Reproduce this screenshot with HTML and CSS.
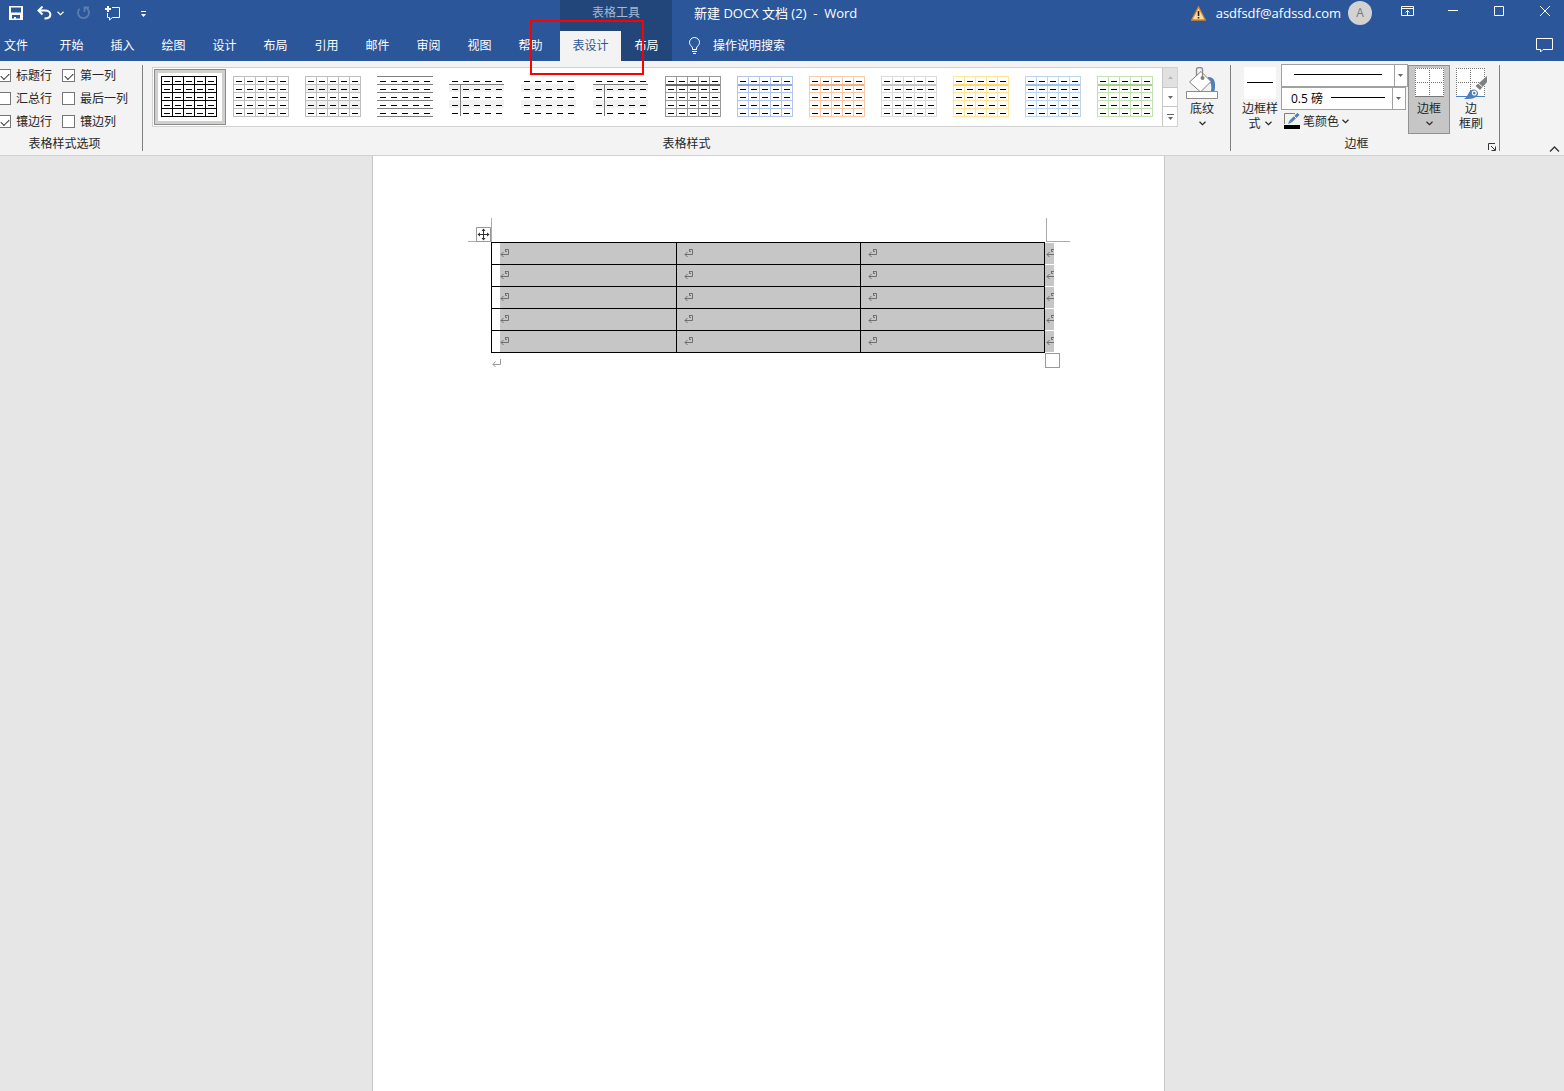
FILE: index.html
```html
<!doctype html>
<html lang="zh-CN">
<head>
<meta charset="utf-8">
<title>新建 DOCX 文档 (2) - Word</title>
<meta name="viewport" content="width=device-width, initial-scale=1">
<link rel="stylesheet" href="styles.css">
</head>
<body>

<!-- shared shapes -->
<svg class="shapes" aria-hidden="true">
  <symbol id="chevron" viewBox="0 0 7 5"><path d="M.5 .8L3.5 3.6L6.5 .8" fill="none" stroke="currentColor" stroke-width="1.2"/></symbol>
  <symbol id="arrow" viewBox="0 0 5 3"><path d="M0 0H5L2.5 3Z" fill="currentColor"/></symbol>
  <symbol id="dashes" viewBox="0 0 56 41"><path d="M3 5.5H53M3 13.5H53M3 21.5H53M3 29.5H53M3 37.5H53" fill="none" stroke="#000" stroke-dasharray="6 5"/></symbol>
  <symbol id="bands" viewBox="0 0 56 41"><path d="M0 8H55V16H0ZM0 24H55V32H0Z" fill="#f2f2f2"/></symbol>
  <symbol id="rows" viewBox="0 0 56 41"><path d="M0 .5H56M0 8.5H56M0 16.5H56M0 24.5H56M0 32.5H56M0 40.5H56" fill="none" stroke="currentColor"/></symbol>
  <symbol id="cols" viewBox="0 0 56 41"><path d="M.5 0V41M11.5 0V41M22.5 0V41M33.5 0V41M44.5 0V41M55.5 0V41" fill="none" stroke="currentColor"/></symbol>
  <symbol id="head" viewBox="0 0 56 41"><path d="M1 9H55" fill="none" stroke="currentColor" stroke-width="2"/></symbol>
  <symbol id="cross" viewBox="0 0 56 41"><path d="M0 8.5H55M11.5 8V40" fill="none" stroke="currentColor"/></symbol>
  <symbol id="cellmark" viewBox="0 0 9 9"><path d="M5 .5H8.500V5.500H1M5.500 0V2.500H7M3.500 3L1 5.500L3.500 8" fill="none" stroke="currentColor" stroke-width=".9"/></symbol>
</svg>

<header>
  <div class="head-left">
    <div class="quick">
      <button class="q-save" aria-label="保存"><svg width="14" height="14"><path d="M0 0H14V14H0ZM2 1.5V6.5H12V1.5ZM3 9V12.500H5V11H7V12.500H11V9Z" fill="#fff" fill-rule="evenodd"/></svg></button>
      <button class="q-undo" aria-label="撤消"><svg width="15" height="14"><path d="M5.500 .5L1.500 4.500L5.500 8.500M1.500 4.500H8C15 4.500 15.500 12.500 7.500 12.500" fill="none" stroke="#fff" stroke-width="2"/></svg></button>
      <button class="q-more" aria-label="撤消列表"><svg width="7" height="5"><use href="#chevron"/></svg></button>
      <button class="q-redo" aria-label="重复" disabled><svg width="14" height="14"><path d="M10 1.700A5.500 5.500 0 1 1 3.500 2.800M8.500 6V1.500H13" fill="none" stroke="#5c7db0" stroke-width="1.800"/></svg></button>
      <button class="q-note" aria-label="新建批注"><svg width="15" height="15"><path d="M7 1.500H14.500V11.500H7.500L4.500 14V11.500H2.500V7" fill="none" stroke="#fff"/><path d="M3 0V6M0 3H6" stroke="#fff" stroke-width="2"/></svg></button>
      <button class="q-custom" aria-label="自定义快速访问工具栏"><svg width="5" height="6"><path d="M0 .5H5" stroke="#fff"/><path d="M0 3H5L2.500 6Z" fill="#fff"/></svg></button>
    </div>
    <nav class="tabs">
      <button class="tab file">文件</button>
      <button class="tab">开始</button>
      <button class="tab">插入</button>
      <button class="tab">绘图</button>
      <button class="tab">设计</button>
      <button class="tab">布局</button>
      <button class="tab">引用</button>
      <button class="tab">邮件</button>
      <button class="tab">审阅</button>
      <button class="tab">视图</button>
      <button class="tab">帮助</button>
    </nav>
  </div>

  <div class="head-context">
    <div class="context-title">表格工具</div>
    <nav class="tabs">
      <button class="tab active">表设计</button>
      <button class="tab">布局</button>
    </nav>
    <div class="red-frame"></div>
  </div>

  <div class="head-right">
    <div class="titlebar">
      <div class="title">新建 DOCX 文档 (2)&nbsp; -&nbsp; Word</div>
      <svg class="warning" width="15" height="15"><path d="M7.500 1L14.300 14H.7Z" fill="#fbdc9a" stroke="#d9822b" stroke-width="1.300"/><path d="M7.500 5V10M7.500 11V12.500" stroke="#222" stroke-width="1.600"/></svg>
      <span class="account">asdfsdf@afdssd.com</span>
      <span class="avatar">A</span>
      <div class="win-buttons">
        <button aria-label="功能区显示选项"><svg width="13" height="10"><path d="M.5 .5H12.500V9.500H.5ZM0 2.500H13M6.500 9V4.500M4.500 6.500L6.500 4.500L8.500 6.500" fill="none" stroke="#fff"/></svg></button>
        <button aria-label="最小化"><svg width="10" height="10"><path d="M0 4.500H10" stroke="#fff"/></svg></button>
        <button aria-label="最大化"><svg width="10" height="10"><path d="M.5 .5H9.500V9.500H.5Z" fill="none" stroke="#fff"/></svg></button>
        <button aria-label="关闭"><svg width="10" height="10"><path d="M0 0L10 10M10 0L0 10" stroke="#fff"/></svg></button>
      </div>
    </div>
    <div class="tellme">
      <svg width="13" height="17"><path d="M4.500 12.500V11C4.500 9.500 1.500 8.500 1.500 5.500A5 5 0 0 1 11.500 5.500C11.500 8.500 8.500 9.500 8.500 11V12.500ZM4 14.500H9M5 16.500H8" fill="none" stroke="#fff"/></svg>
      <button>操作说明搜索</button>
      <button class="comments" aria-label="批注"><svg width="17" height="15"><path d="M.5 .5H16.500V11.500H7L4.500 14V11.500H.5Z" fill="none" stroke="#fff"/></svg></button>
    </div>
  </div>
</header>

<div class="ribbon">
  <section class="group options">
    <div class="group-body checks">
      <label><input type="checkbox" checked>标题行</label>
      <label><input type="checkbox" checked>第一列</label>
      <label><input type="checkbox">汇总行</label>
      <label><input type="checkbox">最后一列</label>
      <label><input type="checkbox" checked>镶边行</label>
      <label><input type="checkbox">镶边列</label>
    </div>
    <div class="group-name">表格样式选项</div>
  </section>

  <section class="group styles">
    <div class="group-body">
      <div class="gallery">
        <button class="thumb selected" aria-label="网格型"><svg color="#000"><use href="#rows"/><use href="#cols"/><use href="#dashes"/></svg></button>
        <button class="thumb" aria-label="网格型浅色"><svg color="#bfbfbf"><use href="#rows"/><use href="#cols"/><use href="#dashes"/></svg></button>
        <button class="thumb" aria-label="无格式表格 1"><svg color="#bfbfbf"><use href="#bands"/><use href="#rows"/><use href="#cols"/><use href="#dashes"/></svg></button>
        <button class="thumb" aria-label="无格式表格 2"><svg color="#7f7f7f"><use href="#rows"/><use href="#dashes"/></svg></button>
        <button class="thumb" aria-label="无格式表格 3"><svg color="#7f7f7f"><use href="#bands"/><use href="#cross"/><use href="#dashes"/></svg></button>
        <button class="thumb" aria-label="无格式表格 4"><svg><use href="#bands"/><use href="#dashes"/></svg></button>
        <button class="thumb" aria-label="无格式表格 5"><svg color="#7f7f7f"><use href="#bands"/><use href="#cross"/><use href="#dashes"/></svg></button>
        <button class="thumb" aria-label="网格表 1 浅色"><svg color="#999"><use href="#rows"/><use href="#cols"/><use href="#head" color="#666"/><use href="#dashes"/></svg></button>
        <button class="thumb" aria-label="网格表 1 着色 1"><svg color="#b4c6e7"><use href="#rows"/><use href="#cols"/><use href="#head" color="#8eaadb"/><use href="#dashes"/></svg></button>
        <button class="thumb" aria-label="网格表 1 着色 2"><svg color="#f7caac"><use href="#rows"/><use href="#cols"/><use href="#head" color="#f4b083"/><use href="#dashes"/></svg></button>
        <button class="thumb" aria-label="网格表 1 着色 3"><svg color="#dbdbdb"><use href="#rows"/><use href="#cols"/><use href="#head" color="#c9c9c9"/><use href="#dashes"/></svg></button>
        <button class="thumb" aria-label="网格表 1 着色 4"><svg color="#ffe599"><use href="#rows"/><use href="#cols"/><use href="#head" color="#ffd966"/><use href="#dashes"/></svg></button>
        <button class="thumb" aria-label="网格表 1 着色 5"><svg color="#bdd6ee"><use href="#rows"/><use href="#cols"/><use href="#head" color="#9cc2e5"/><use href="#dashes"/></svg></button>
        <button class="thumb" aria-label="网格表 1 着色 6"><svg color="#c5e0b3"><use href="#rows"/><use href="#cols"/><use href="#head" color="#a8d08d"/><use href="#dashes"/></svg></button>
        <div class="gallery-nav">
          <button aria-label="上一行" disabled><svg width="5" height="3"><path d="M0 3H5L2.500 0Z" fill="#b8b8b8"/></svg></button>
          <button aria-label="下一行"><svg width="5" height="3"><use href="#arrow"/></svg></button>
          <button aria-label="其他"><svg width="7" height="6"><path d="M0 .5H7" stroke="currentColor"/><path d="M1 3H6L3.500 6Z" fill="currentColor"/></svg></button>
        </div>
      </div>
      <button class="big shading">
        <svg width="32" height="32"><path d="M22 10C29 10 30 16 28.500 24H25C26 19 25 15 22 12Z" fill="#4a80bd"/><path d="M15 4.500L25 14.500L14.500 25L3.500 15Z" fill="#fff" stroke="#7f7f7f"/><path d="M10.500 9V2C10.500 0 16.500 0 16.500 2V10" fill="none" stroke="#8a8a8a" stroke-width="1.300"/><circle cx="16.500" cy="11" r="2" fill="#7f7f7f"/><path d="M.5 24.500H31.500V31.500H.5Z" fill="#fff" stroke="#8a8a8a"/></svg>
        <span>底纹</span>
        <svg class="drop" width="7" height="5"><use href="#chevron"/></svg>
      </button>
    </div>
    <div class="group-name">表格样式</div>
  </section>

  <section class="group borders">
    <div class="group-body">
      <button class="big border-style">
        <svg width="32" height="32"><path d="M0 0H32V32H0Z" fill="#fff"/><path d="M3 15.500H29" stroke="#000"/></svg>
        <span>边框样</span>
        <span>式 <svg width="7" height="5"><use href="#chevron"/></svg></span>
      </button>
      <div class="pen">
        <div class="combo">
          <select class="line-style" aria-label="笔样式"><option></option></select>
          <svg width="5" height="3"><use href="#arrow"/></svg>
        </div>
        <div class="combo narrow">
          <select class="line-weight" aria-label="笔划粗细"><option>0.5 磅</option></select>
          <svg width="5" height="3"><use href="#arrow"/></svg>
        </div>
        <button class="pen-color">
          <svg width="16" height="16"><path d="M11 .5H.5V11" fill="none" stroke="#7f7f7f"/><path d="M4 11L5.500 7.500L7.500 9.500Z" fill="#4a80bd"/><path d="M6.500 8.500L14.500 1" stroke="#4a80bd" stroke-width="3"/><path d="M10 3L13 6" stroke="#f3f3f3"/><path d="M0 12H16V16H0Z"/></svg>
          笔颜色
          <svg width="7" height="5"><use href="#chevron"/></svg>
        </button>
      </div>
      <button class="big pressed">
        <svg width="32" height="32"><path d="M2 1H31V30H2Z" fill="#fff"/><path d="M2 1.500H31M2 15.500H31M2.500 1V29M16.500 1V29M30.500 1V29" stroke="#777" stroke-dasharray="1 1"/><path d="M2 29.500H31" stroke="#777"/></svg>
        <span>边框</span>
        <svg class="drop" width="7" height="5"><use href="#chevron"/></svg>
      </button>
      <button class="big">
        <svg width="32" height="32"><path d="M1 1H30V30H1Z" fill="#fff"/><path d="M1 1.500H30M1 15.500H30M1.500 1V29M15.500 1V29M29.500 1V29" stroke="#777" stroke-dasharray="1 1"/><path d="M1 29.500H30" stroke="#4a80bd"/><path d="M32 9V15L25 23L20.500 19Z" fill="#7f7f7f"/><path d="M23 16L27.500 20" stroke="#fff"/><path d="M9 32C13 30 13 24 17 23C21 21 25 26 22 29C19 32 15 32 9 32Z" fill="#4a80bd"/><path d="M17.500 25C20 23 23 26 20 28C18 28 17 27 17.500 25Z" fill="none" stroke="#fff" stroke-width="1.200"/></svg>
        <span>边</span>
        <span>框刷</span>
      </button>
    </div>
    <div class="group-name">边框</div>
    <button class="launcher" aria-label="边框和底纹"><svg width="8" height="8"><path d="M.5 7V.5H7M3 3L7 7M7.500 3.500V7.500H3.500" fill="none" stroke="#333"/></svg></button>
  </section>

  <div class="ribbon-end">
    <button aria-label="折叠功能区"><svg width="11" height="6"><path d="M1 5.500L5.500 1L10 5.500" fill="none" stroke="#333" stroke-width="1.300"/></svg></button>
  </div>
</div>

<main>
  <div class="page">
    <div class="text-area">
      <i class="crop crop-left"></i>
      <i class="crop crop-right"></i>
      <svg class="move" width="15" height="15"><path d="M.5 .5H14.500V14.500H.5Z" fill="#fff" stroke="#999"/><path d="M7.500 3V12M3 7.500H12" stroke="#333"/><path d="M7.500 1.500L9.500 4H5.500ZM7.500 13.500L9.500 11H5.500ZM1.500 7.500L4 5.500V9.500ZM13.500 7.500L11 5.500V9.500Z" fill="#333"/></svg>
      <table>
        <tr>
          <td><svg><use href="#cellmark"/></svg></td>
          <td><svg><use href="#cellmark"/></svg></td>
          <td><svg><use href="#cellmark"/></svg></td>
          <td class="row-end"><svg><use href="#cellmark"/></svg></td>
        </tr>
        <tr>
          <td><svg><use href="#cellmark"/></svg></td>
          <td><svg><use href="#cellmark"/></svg></td>
          <td><svg><use href="#cellmark"/></svg></td>
          <td class="row-end"><svg><use href="#cellmark"/></svg></td>
        </tr>
        <tr>
          <td><svg><use href="#cellmark"/></svg></td>
          <td><svg><use href="#cellmark"/></svg></td>
          <td><svg><use href="#cellmark"/></svg></td>
          <td class="row-end"><svg><use href="#cellmark"/></svg></td>
        </tr>
        <tr>
          <td><svg><use href="#cellmark"/></svg></td>
          <td><svg><use href="#cellmark"/></svg></td>
          <td><svg><use href="#cellmark"/></svg></td>
          <td class="row-end"><svg><use href="#cellmark"/></svg></td>
        </tr>
        <tr>
          <td><svg><use href="#cellmark"/></svg></td>
          <td><svg><use href="#cellmark"/></svg></td>
          <td><svg><use href="#cellmark"/></svg></td>
          <td class="row-end"><svg><use href="#cellmark"/></svg></td>
        </tr>
      </table>
      <div class="after-table">
        <svg class="paragraph" width="9" height="9"><path d="M8.500 0V5.500H1M3.500 2.500L1 5.500L3.500 8" fill="none" stroke="#999"/></svg>
        <i class="resize"></i>
      </div>
    </div>
  </div>
</main>

</body>
</html>
```

FILE: styles.css
```css
* { box-sizing: border-box; }

html { height: 100%; }

body {
	display: flex;
	flex-direction: column;
	height: 100%;
	margin: 0;
	background-color: #e6e6e6;
	color: #262626;
	font-family: "Open Sans", "Noto Sans CJK SC", sans-serif;
	font-size: 12px;
	line-height: 15px;
	overflow: hidden;
}

button {
	margin: 0;
	padding: 0;
	border: none;
	background: none;
	color: inherit;
	font: inherit;
	white-space: nowrap;
}

svg { display: block; flex: none; }

.shapes { position: absolute; width: 0; height: 0; }

/* title bar and tabs */

header {
	display: flex;
	flex: none;
	height: 61px;
	background-color: #2b579a;
	color: #fff;
}

.head-left { width: 560px; }

.quick {
	display: flex;
	align-items: center;
	height: 26px;
	margin-bottom: 5px;
	padding-left: 9px;
}

.q-undo { margin-left: 14px; }
.q-more { margin-left: 5px; }
.q-redo { margin-left: 12px; }
.q-note { margin-left: 15px; }
.q-custom { margin: 2px 0 0 21px; }

.tabs { display: flex; height: 30px; }

.tab { width: 51px; padding-bottom: 2px; }

.tab.file {
	width: 46px;
	padding-left: 4px;
	text-align: left;
}

.tab.active {
	width: 61px;
	background-color: #f3f3f3;
	color: #2b579a;
}

.head-context {
	position: relative;
	width: 112px;
	background-color: #22457a;
}

.context-title {
	height: 26px;
	margin-bottom: 5px;
	color: #a6b8d4;
	line-height: 26px;
	text-align: center;
}

.red-frame {
	position: absolute;
	z-index: 2;
	top: 20px;
	left: -30px;
	width: 114px;
	height: 55px;
	border: 2px solid #f00;
	pointer-events: none;
}

.head-right { flex: 1; min-width: 0; }

.titlebar {
	display: flex;
	align-items: center;
	height: 26px;
	margin-bottom: 5px;
	padding-left: 22px;
}

.title, .account { font-size: 13px; }

.title { flex: 1; white-space: nowrap; }

.account { margin: 0 7px 0 10px; }

.avatar {
	width: 24px;
	height: 24px;
	border-radius: 50%;
	background-color: #d2d2d2;
	color: #777;
	line-height: 24px;
	text-align: center;
}

.win-buttons {
	display: flex;
	align-self: flex-start;
	margin: 0 -4px 0 12px;
}

.win-buttons button {
	display: flex;
	align-items: center;
	justify-content: center;
	width: 46px;
	height: 22px;
}

.tellme {
	display: flex;
	align-items: center;
	gap: 12px;
	height: 30px;
	padding: 0 11px 2px 16px;
}

.comments { margin-left: auto; }

/* ribbon */

.ribbon {
	display: flex;
	flex: none;
	height: 95px;
	border-bottom: 1px solid #d2d2d2;
	background-color: #f3f3f3;
}

.group {
	position: relative;
	display: flex;
	flex-direction: column;
	margin: 4px 0;
	border-right: 1px solid #808080;
}

.group-body { display: flex; height: 72px; }

.group-name { padding-top: 1px; text-align: center; }

.options { width: 143px; padding-right: 13px; }

.options .checks {
	display: grid;
	grid-template-columns: 64px 70px;
	grid-auto-rows: 23px;
	margin: -1px 0 1px -2px;
}

.checks label {
	display: flex;
	align-items: center;
	gap: 5px;
	white-space: nowrap;
}

.checks input {
	appearance: none;
	width: 13px;
	height: 13px;
	margin: 0;
	border: 1px solid #767676;
	background-color: #fff;
}

.checks input:checked::before {
	content: "";
	display: block;
	width: 7px;
	height: 4px;
	margin: 3px 0 0 2px;
	border: solid #333;
	border-width: 0 0 1px 1px;
	transform: rotate(-45deg);
}

.styles { flex: 1; min-width: 0; }

.styles .group-body { padding: 0 4px 0 9px; }

.gallery {
	display: flex;
	flex: 1;
	min-width: 0;
	height: 60px;
	margin-top: 2px;
	padding-left: 1px;
	border: 1px solid #d2d2d2;
	background-color: #fff;
	overflow: hidden;
}

.thumb {
	flex: none;
	width: 72px;
	height: 56px;
	margin-top: 1px;
	padding: 0 0 1px 7px;
}

.thumb svg { width: 56px; height: 41px; }

.thumb.selected {
	box-shadow: inset 0 0 0 1px #8c8c8c, inset 0 0 0 4px #d0cfcb;
}

.gallery-nav {
	display: flex;
	flex: none;
	flex-direction: column;
	width: 15px;
	margin-left: auto;
	border-left: 1px solid #c6c6c6;
	color: #666;
}

.gallery-nav button {
	display: flex;
	flex: 1;
	align-items: center;
	justify-content: center;
	border-top: 1px solid #c6c6c6;
}

.gallery-nav button:first-child {
	border-top: none;
	background-color: #e1e1e1;
}

.big {
	display: flex;
	flex: none;
	flex-direction: column;
	align-items: center;
	width: 42px;
	height: 69px;
	padding-top: 2px;
}

.big > svg:first-child { margin-bottom: 2px; }

.big span { display: flex; align-items: center; gap: 4px; }

.drop { margin-top: 5px; }

.shading { width: 48px; }

.borders { flex: none; width: 269px; }

.borders .group-body { padding-left: 8px; }

.borders .group-name { padding-right: 17px; }

.pressed {
	padding-top: 1px;
	border: 1px solid #919191;
	background-color: #c6c6c6;
}

.pen { flex: none; width: 127px; }

.combo {
	position: relative;
	height: 23px;
	margin-top: -1px;
	border: 1px solid #a0a0a0;
	background-color: #fff;
}

.combo + .combo { margin-top: 0; }

.narrow { width: 125px; }

.combo select {
	appearance: none;
	display: block;
	width: 100%;
	height: 21px;
	padding: 0 0 0 9px;
	border: none;
	background-color: transparent;
	background-repeat: no-repeat;
	color: #000;
	font: inherit;
}

.combo .line-style {
	background-image: linear-gradient(#000, #000), linear-gradient(#a0a0a0, #a0a0a0);
	background-position: 12px 9px, 112px 0;
	background-size: 88px 1px, 1px 21px;
}

.combo .line-weight {
	background-image: linear-gradient(#000, #000), linear-gradient(#a0a0a0, #a0a0a0);
	background-position: 49px 9px, 110px 0;
	background-size: 54px 1px, 1px 21px;
}

.combo svg {
	position: absolute;
	top: 9px;
	right: 4px;
	color: #666;
	pointer-events: none;
}

.pen-color {
	display: flex;
	align-items: center;
	gap: 3px;
	height: 22px;
	padding-left: 3px;
}

.launcher {
	position: absolute;
	right: 3px;
	bottom: 0;
}

.ribbon-end {
	display: flex;
	flex: none;
	align-items: flex-end;
	justify-content: flex-end;
	width: 64px;
	padding: 0 4px 3px 0;
}

/* document */

main {
	display: flex;
	flex: 1;
	justify-content: center;
	padding-right: 27px;
}

.page {
	width: 793px;
	padding: 86px 118px 0;
	border: solid #c6c6c6;
	border-width: 0 1px;
	background-color: #fff;
}

.text-area { position: relative; }

.crop {
	position: absolute;
	top: -24px;
	width: 24px;
	height: 24px;
	border: solid #ababab;
}

.crop-left { right: 100%; margin-right: -1px; border-width: 0 1px 1px 0; }

.crop-right { left: 100%; border-width: 0 0 1px 1px; }

.move {
	position: absolute;
	top: -15px;
	left: -15px;
}

table {
	width: 563px;
	border-spacing: 0;
	table-layout: fixed;
}

td {
	width: 184px;
	height: 22px;
	padding: 0 0 0 7px;
	border: solid #000;
	border-width: 0 1px 1px 0;
	background-color: #c6c6c6;
	color: #666;
}

tr:first-child td { height: 23px; border-top-width: 1px; }

td:first-child {
	width: 186px;
	padding-left: 8px;
	border-left-width: 1px;
	background-image: linear-gradient(#fff, #fff);
	background-size: 8px 100%;
	background-repeat: no-repeat;
}

td svg { width: 9px; height: 9px; }

td.row-end {
	width: 9px;
	padding-left: 1px;
	border-color: #fff;
	border-right: none;
	overflow: hidden;
}

.after-table { display: flex; justify-content: space-between; }

.paragraph { margin: 6px 0 0 1px; }

.resize {
	width: 15px;
	height: 15px;
	margin-right: -14px;
	border: 1px solid #999;
	background-color: #fff;
}
```
